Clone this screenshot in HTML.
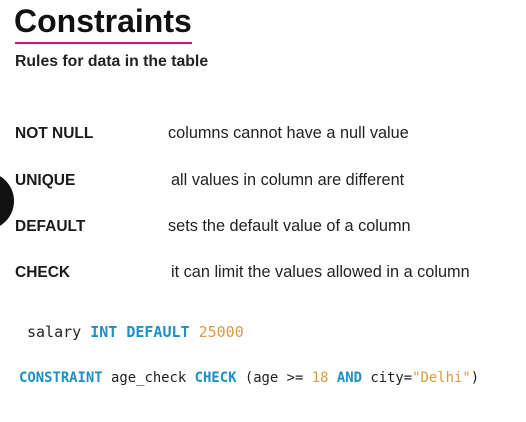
<!DOCTYPE html>
<html><head><style>
body{margin:0;width:526px;height:422px;background:#fff;position:relative;overflow:hidden;font-family:"Liberation Sans",sans-serif;color:#111}
.a{position:absolute;white-space:nowrap}
h1{position:absolute;left:14px;top:3px;margin:0;font-size:32px;font-weight:bold;letter-spacing:0px}
.ul{position:absolute;left:15px;top:42px;width:177px;height:2px;background:#d0157a}
.sub{left:15px;top:53px;font-size:15.8px;font-weight:bold;color:#222}
.k{left:15px;font-size:15.5px;font-weight:bold;color:#1a1a1a}
.d{font-size:16.3px;color:#222}
.code{font-family:"DejaVu Sans Mono","Liberation Mono",monospace;color:#222}
.b{color:#1d8fc4;font-weight:bold}
.o{color:#d99a40}
.circ{position:absolute;left:-44px;top:172px;width:58px;height:58px;border-radius:50%;background:#111}
</style></head><body>
<h1>Constraints</h1>
<div class="ul"></div>
<div class="a sub">Rules for data in the table</div>
<div class="circ"></div>
<div class="a k" style="top:125px">NOT NULL</div><div class="a d" style="left:168px;top:124px">columns cannot have a null value</div>
<div class="a k" style="top:172px">UNIQUE</div><div class="a d" style="left:171px;top:171px">all values in column are different</div>
<div class="a k" style="top:218px">DEFAULT</div><div class="a d" style="left:168px;top:217px">sets the default value of a column</div>
<div class="a k" style="top:264px">CHECK</div><div class="a d" style="left:171px;top:263px">it can limit the values allowed in a column</div>
<div class="a code" style="left:27px;top:323px;font-size:15px">salary <span class="b">INT DEFAULT</span> <span class="o">25000</span></div>
<div class="a code" style="left:19px;top:370px;font-size:13.9px"><span class="b">CONSTRAINT</span> age_check <span class="b">CHECK</span> (age &gt;= <span class="o">18</span> <span class="b">AND</span> city=<span class="o">"Delhi"</span>)</div>
</body></html>
